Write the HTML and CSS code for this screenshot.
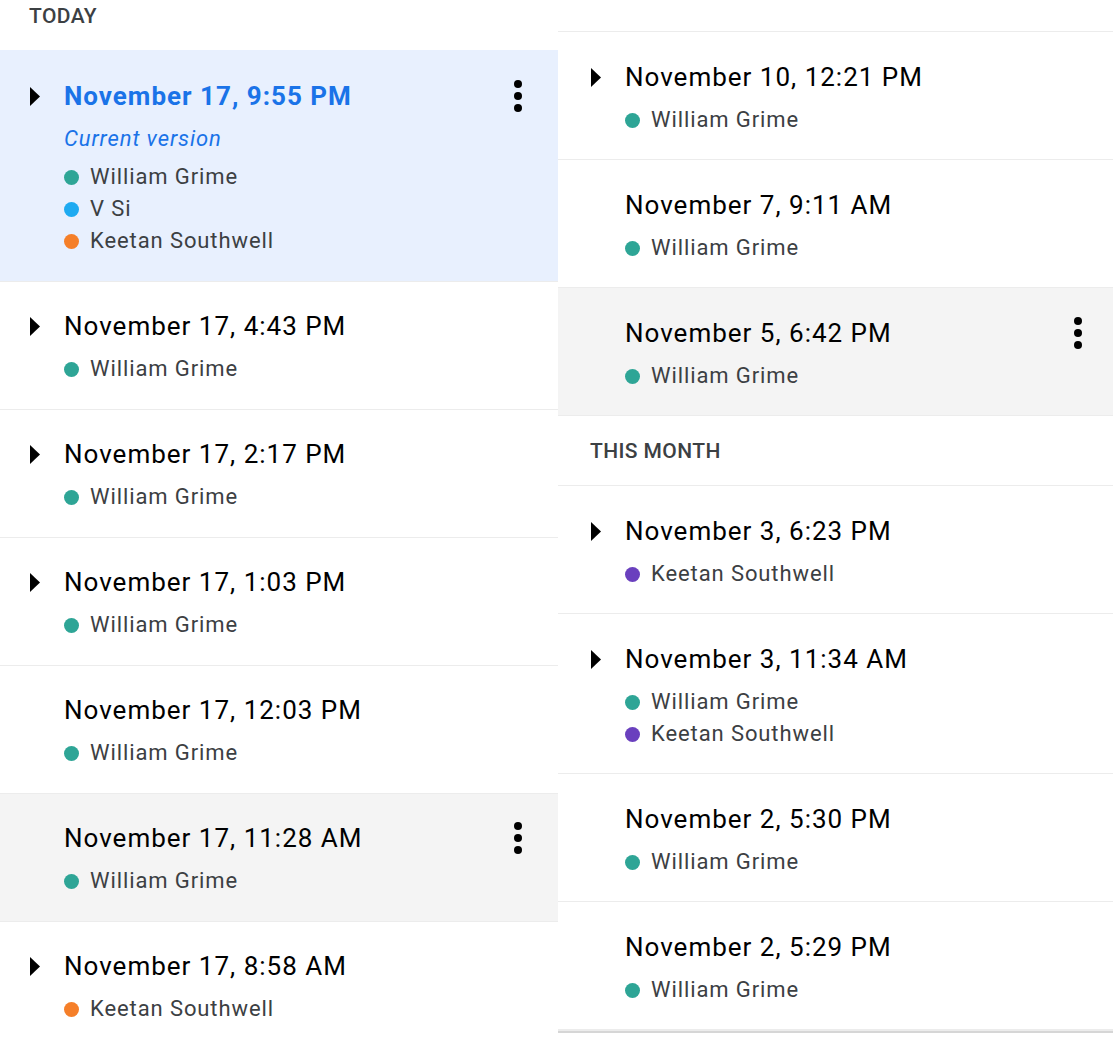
FILE: index.html
```html
<!DOCTYPE html>
<html lang="en">
<head>
<meta charset="utf-8">
<title>Version history</title>
<link rel="stylesheet" href="styles.css">
</head>
<body>
<div class="page">
  <section class="col col-left">
    <div class="group-head group-head-top">TODAY</div>

    <div class="row row-selected">
      <span class="caret"><svg width="10" height="19" viewBox="0 0 10 19"><path d="M0 0L10 9.5L0 19Z"/></svg></span>
      <div class="body">
        <div class="title title-current">November 17, 9:55 PM</div>
        <div class="current">Current version</div>
        <ul class="authors authors-tight">
          <li><span class="dot teal"></span>William Grime</li>
          <li><span class="dot blue"></span>V Si</li>
          <li><span class="dot orange"></span>Keetan Southwell</li>
        </ul>
      </div>
      <span class="kebab"><svg width="8" height="32" viewBox="0 0 8 32"><circle cx="4" cy="4" r="4"/><circle cx="4" cy="16" r="4"/><circle cx="4" cy="28" r="4"/></svg></span>
    </div>

    <div class="row">
      <span class="caret"><svg width="10" height="19" viewBox="0 0 10 19"><path d="M0 0L10 9.5L0 19Z"/></svg></span>
      <div class="body">
        <div class="title">November 17, 4:43 PM</div>
        <ul class="authors"><li><span class="dot teal"></span>William Grime</li></ul>
      </div>
    </div>

    <div class="row">
      <span class="caret"><svg width="10" height="19" viewBox="0 0 10 19"><path d="M0 0L10 9.5L0 19Z"/></svg></span>
      <div class="body">
        <div class="title">November 17, 2:17 PM</div>
        <ul class="authors"><li><span class="dot teal"></span>William Grime</li></ul>
      </div>
    </div>

    <div class="row">
      <span class="caret"><svg width="10" height="19" viewBox="0 0 10 19"><path d="M0 0L10 9.5L0 19Z"/></svg></span>
      <div class="body">
        <div class="title">November 17, 1:03 PM</div>
        <ul class="authors"><li><span class="dot teal"></span>William Grime</li></ul>
      </div>
    </div>

    <div class="row">
      <span class="caret"></span>
      <div class="body">
        <div class="title">November 17, 12:03 PM</div>
        <ul class="authors"><li><span class="dot teal"></span>William Grime</li></ul>
      </div>
    </div>

    <div class="row row-hover">
      <span class="caret"></span>
      <div class="body">
        <div class="title">November 17, 11:28 AM</div>
        <ul class="authors"><li><span class="dot teal"></span>William Grime</li></ul>
      </div>
      <span class="kebab"><svg width="8" height="32" viewBox="0 0 8 32"><circle cx="4" cy="4" r="4"/><circle cx="4" cy="16" r="4"/><circle cx="4" cy="28" r="4"/></svg></span>
    </div>

    <div class="row">
      <span class="caret"><svg width="10" height="19" viewBox="0 0 10 19"><path d="M0 0L10 9.5L0 19Z"/></svg></span>
      <div class="body">
        <div class="title">November 17, 8:58 AM</div>
        <ul class="authors"><li><span class="dot orange"></span>Keetan Southwell</li></ul>
      </div>
    </div>
  </section>

  <section class="col col-right">
    <div class="top-gap"></div>

    <div class="row">
      <span class="caret"><svg width="10" height="19" viewBox="0 0 10 19"><path d="M0 0L10 9.5L0 19Z"/></svg></span>
      <div class="body">
        <div class="title">November 10, 12:21 PM</div>
        <ul class="authors"><li><span class="dot teal"></span>William Grime</li></ul>
      </div>
    </div>

    <div class="row">
      <span class="caret"></span>
      <div class="body">
        <div class="title">November 7, 9:11 AM</div>
        <ul class="authors"><li><span class="dot teal"></span>William Grime</li></ul>
      </div>
    </div>

    <div class="row row-hover">
      <span class="caret"></span>
      <div class="body">
        <div class="title">November 5, 6:42 PM</div>
        <ul class="authors"><li><span class="dot teal"></span>William Grime</li></ul>
      </div>
      <span class="kebab"><svg width="8" height="32" viewBox="0 0 8 32"><circle cx="4" cy="4" r="4"/><circle cx="4" cy="16" r="4"/><circle cx="4" cy="28" r="4"/></svg></span>
    </div>

    <div class="group-head group-head-mid">THIS MONTH</div>

    <div class="row">
      <span class="caret"><svg width="10" height="19" viewBox="0 0 10 19"><path d="M0 0L10 9.5L0 19Z"/></svg></span>
      <div class="body">
        <div class="title">November 3, 6:23 PM</div>
        <ul class="authors"><li><span class="dot purple"></span>Keetan Southwell</li></ul>
      </div>
    </div>

    <div class="row">
      <span class="caret"><svg width="10" height="19" viewBox="0 0 10 19"><path d="M0 0L10 9.5L0 19Z"/></svg></span>
      <div class="body">
        <div class="title">November 3, 11:34 AM</div>
        <ul class="authors">
          <li><span class="dot teal"></span>William Grime</li>
          <li><span class="dot purple"></span>Keetan Southwell</li>
        </ul>
      </div>
    </div>

    <div class="row">
      <span class="caret"></span>
      <div class="body">
        <div class="title">November 2, 5:30 PM</div>
        <ul class="authors"><li><span class="dot teal"></span>William Grime</li></ul>
      </div>
    </div>

    <div class="row row-last">
      <span class="caret"></span>
      <div class="body">
        <div class="title">November 2, 5:29 PM</div>
        <ul class="authors"><li><span class="dot teal"></span>William Grime</li></ul>
      </div>
    </div>
    <div class="end-rule"></div>
  </section>
</div>
</body>
</html>
```

FILE: styles.css
```css
* { box-sizing: border-box; }

html, body {
  margin: 0;
  padding: 0;
  background: #ffffff;
}

body {
  font-family: Roboto, "Liberation Sans", Arial, sans-serif;
  color: #000;
  width: 1113px;
  height: 1040px;
  overflow: hidden;
}

.page {
  display: grid;
  grid-template-columns: 558px 555px;
  align-items: start;
}

.col {
  display: flex;
  flex-direction: column;
}

.group-head {
  font-size: 21px;
  font-weight: 500;
  color: #3c4043;
  letter-spacing: 0.4px;
}

.group-head-top {
  height: 50px;
  padding: 4px 0 0 29px;
  line-height: 24px;
}

.group-head-mid {
  height: 70px;
  padding: 23px 0 0 32px;
  line-height: 24px;
  border-bottom: 1px solid #ececec;
}

.top-gap {
  height: 32px;
  border-bottom: 1px solid #ececec;
}

.row {
  display: grid;
  grid-template-columns: 34px 1fr auto;
  align-items: start;
  padding: 26px 36px 24px 30px;
  border-bottom: 1px solid #ececec;
}

.col-right .row {
  padding: 27px 31px 23px 33px;
}

.row-selected {
  background: #e8f0fe;
  padding-top: 28px;
  padding-bottom: 24px;
}

.row-hover {
  background: #f4f4f4;
}

.caret {
  height: 36px;
  display: flex;
  align-items: center;
}

.caret svg { display: block; fill: #000; }

.title {
  font-size: 26px;
  line-height: 36px;
  letter-spacing: 1px;
  color: #000;
  white-space: nowrap;
}

.title-current {
  color: #1a73e8;
  font-weight: 700;
}

.current {
  margin-top: 9px;
  font-size: 22px;
  line-height: 32px;
  letter-spacing: 0.9px;
  font-style: italic;
  color: #1a73e8;
}

.authors {
  list-style: none;
  margin: 9px 0 0 0;
  padding: 0;
}

.authors-tight { margin-top: 6px; }

.authors li {
  display: flex;
  align-items: center;
  font-size: 22px;
  line-height: 32px;
  letter-spacing: 0.9px;
  color: #3c4043;
  white-space: nowrap;
}

.dot {
  width: 15px;
  height: 15px;
  border-radius: 50%;
  margin: 0 11px 0 0;
  flex: none;
}

.teal { background: #2ea596; }
.blue { background: #1eaaf1; }
.orange { background: #f57f29; }
.purple { background: #6a40be; }

.kebab {
  height: 36px;
  display: flex;
  align-items: center;
}

.kebab svg { display: block; fill: #000; }

.row-last {
  border-bottom: 2px solid #ececec;
}

.end-rule {
  height: 2px;
  background: #d6d6d6;
}
```
